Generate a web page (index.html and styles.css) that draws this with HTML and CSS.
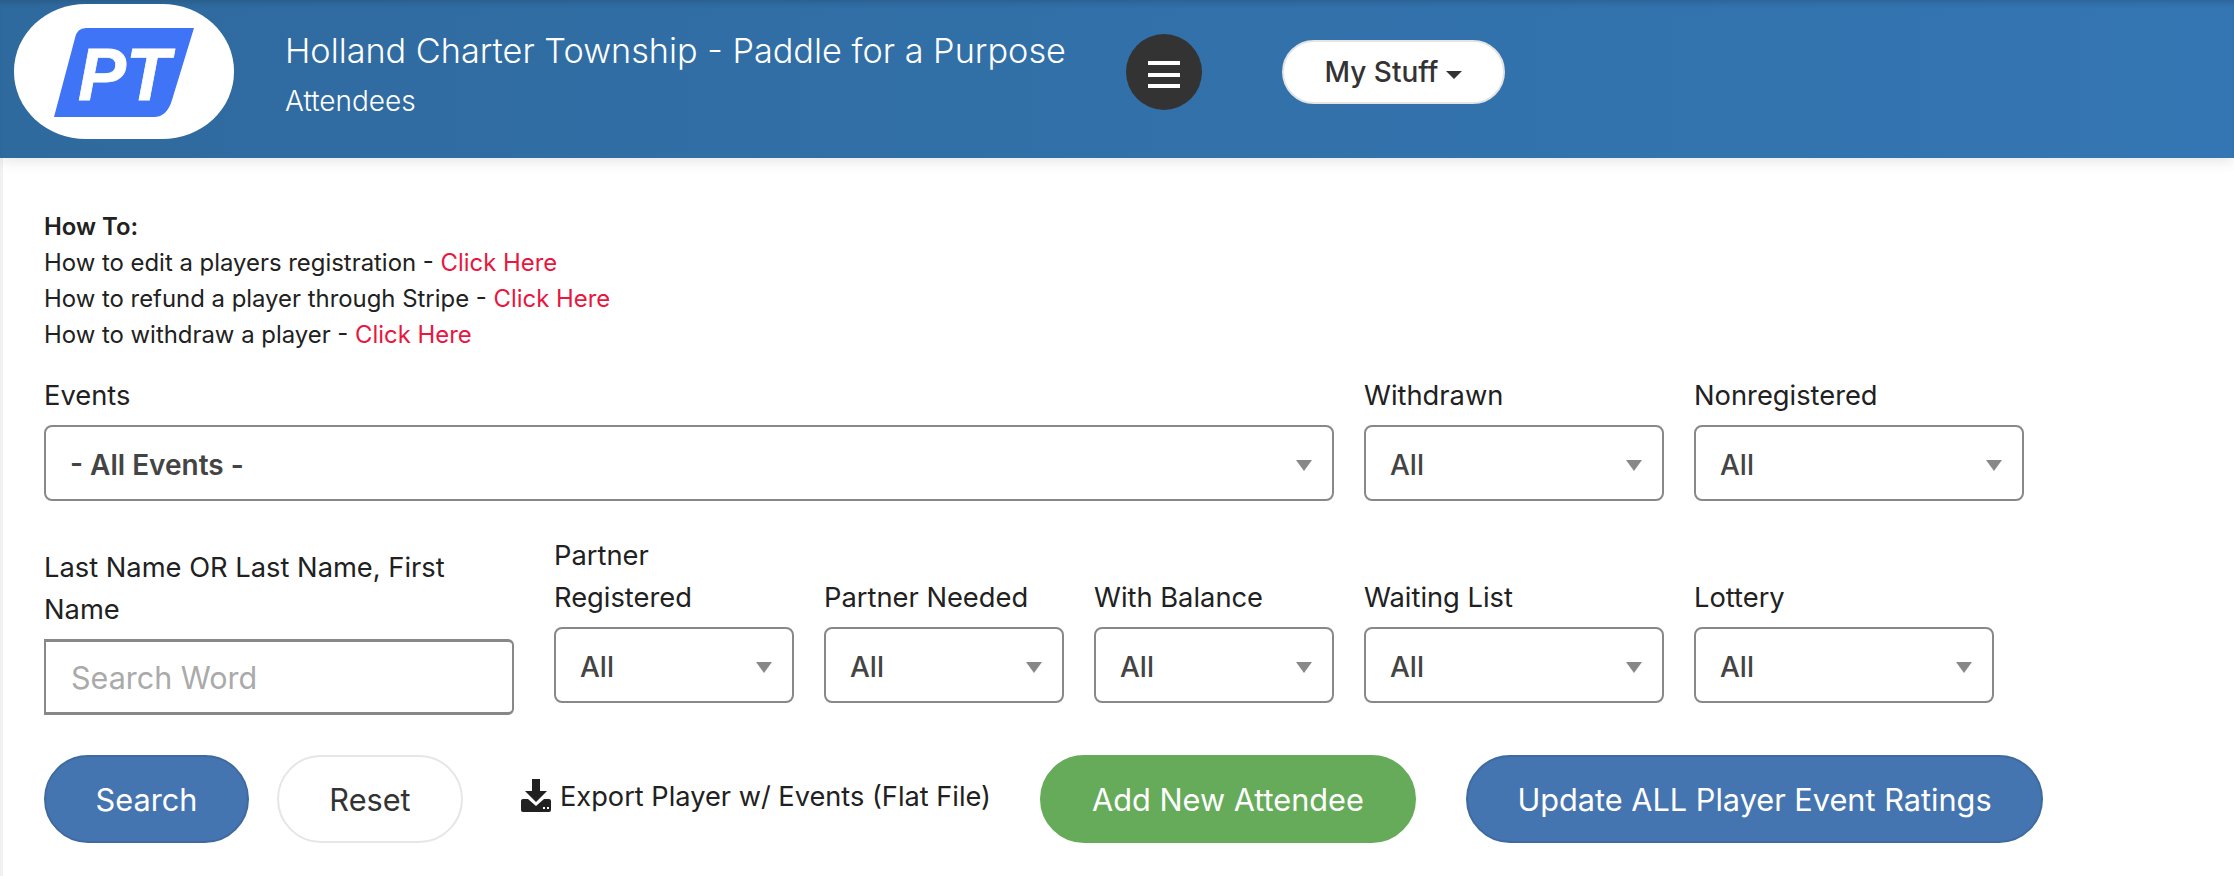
FILE: index.html
```html
<!DOCTYPE html>
<html lang="en">
<head>
<meta charset="utf-8">
<title>Attendees</title>
<link rel="stylesheet" href="styles.css">
</head>
<body>
<header class="topbar">
  <div class="logo">
    <svg class="logo-mark" viewBox="0 0 140 89" aria-hidden="true">
      <path class="logo-shape" d="M32 0H140L118 72Q113 89 100 89H0L21 10Q23 0 32 0Z"/>
      <text class="logo-text" x="24" y="72" textLength="92" lengthAdjust="spacingAndGlyphs">PT</text>
    </svg>
  </div>
  <div class="titles">
    <div class="title">Holland Charter Township - Paddle for a Purpose</div>
    <div class="subtitle">Attendees</div>
  </div>
  <button class="menu-btn" aria-label="Menu"><span></span><span></span><span></span></button>
  <button class="stuff-btn">My Stuff<i class="caret"></i></button>
</header>
<main class="content">
  <section class="howto">
    <div class="howto-head">How To:</div>
    <div>How to edit a players registration - <a href="#">Click Here</a></div>
    <div>How to refund a player through Stripe - <a href="#">Click Here</a></div>
    <div>How to withdraw a player - <a href="#">Click Here</a></div>
  </section>
  <form class="filters">
    <div class="row row-one">
      <div class="field w-events">
        <label>Events</label>
        <div class="select"><select class="strong"><option>- All Events -</option></select></div>
      </div>
      <div class="field w-300">
        <label>Withdrawn</label>
        <div class="select"><select><option>All</option></select></div>
      </div>
      <div class="field w-330">
        <label>Nonregistered</label>
        <div class="select"><select><option>All</option></select></div>
      </div>
    </div>
    <div class="row row-two">
      <div class="field w-name">
        <label class="label-name">Last Name OR Last Name, First Name</label>
        <input class="search" type="text" placeholder="Search Word">
      </div>
      <div class="field w-240">
        <label class="label-narrow">Partner Registered</label>
        <div class="select"><select><option>All</option></select></div>
      </div>
      <div class="field w-240">
        <label>Partner Needed</label>
        <div class="select"><select><option>All</option></select></div>
      </div>
      <div class="field w-240">
        <label>With Balance</label>
        <div class="select"><select><option>All</option></select></div>
      </div>
      <div class="field w-300">
        <label>Waiting List</label>
        <div class="select"><select><option>All</option></select></div>
      </div>
      <div class="field w-300">
        <label>Lottery</label>
        <div class="select"><select><option>All</option></select></div>
      </div>
    </div>
    <div class="actions">
      <button type="button" class="btn btn-blue btn-search">Search</button>
      <button type="button" class="btn btn-white btn-reset">Reset</button>
      <a class="export" href="#">
        <svg class="export-icon" viewBox="0 0 30 33" aria-hidden="true">
          <path d="M11 0H19V12H26L15 23L4 12H11Z"/>
          <path fill-rule="evenodd" d="M0 22Q0 20 2 20H7L15 27L23 20H28Q30 20 30 22V31Q30 33 28 33H2Q0 33 0 31ZM22 28V30H24V28ZM26 28V30H28V28Z"/>
        </svg>
        <span>Export Player w/ Events (Flat File)</span>
      </a>
      <button type="button" class="btn btn-green btn-add">Add New Attendee</button>
      <button type="button" class="btn btn-blue btn-update">Update ALL Player Event Ratings</button>
    </div>
  </form>
</main>
</body>
</html>
```
FILE: styles.css
```css
* { box-sizing: border-box; }
html, body { margin: 0; padding: 0; height: 100%; }
body {
  font-family: Inter, "Liberation Sans", sans-serif;
  color: #212121;
  background: #fff;
  overflow: hidden;
}
.topbar {
  height: 158px;
  display: flex;
  align-items: flex-start;
  background: linear-gradient(90deg, #2f6a9e 0%, #3476b3 100%);
  box-shadow: inset 0 6px 6px -4px rgba(30, 60, 90, .35), 0 2px 14px rgba(0, 0, 0, .12);
  position: relative;
}
.logo {
  width: 220px;
  height: 135px;
  margin: 4px 0 0 14px;
  border-radius: 72px / 67px;
  background: #fff;
  display: flex;
  align-items: center;
  justify-content: center;
  flex: none;
}
.logo-mark { width: 140px; height: 89px; margin-top: 1px; }
.logo-shape { fill: #4074f6; }
.logo-text {
  fill: #fff;
  stroke: #fff;
  stroke-width: .8px;
  font-family: "Liberation Sans", sans-serif;
  font-size: 75px;
  font-weight: 700;
  font-style: italic;
}
.titles { margin-left: 51px; width: 841px; flex: none; color: #fff; }
.title { font-size: 34.25px; font-weight: 300; line-height: 40px; margin-top: 31px; white-space: nowrap; }
.subtitle { font-size: 28px; font-weight: 300; line-height: 32px; margin-top: 14px; }
.menu-btn {
  width: 76px;
  height: 76px;
  margin: 34px 0 0 0;
  flex: none;
  border: 0;
  padding: 5px 0 0;
  border-radius: 50%;
  background: #333;
  display: flex;
  flex-direction: column;
  align-items: center;
  justify-content: center;
  gap: 7.5px;
}
.menu-btn span { display: block; width: 32px; height: 4px; background: #fff; }
.stuff-btn {
  width: 223px;
  height: 64px;
  margin: 40px 0 0 80px;
  flex: none;
  border: 2px solid #e4e4e4;
  border-radius: 32px;
  background: #fff;
  font: 500 28px Inter, "Liberation Sans", sans-serif;
  color: #333;
  padding: 0;
}
.caret {
  display: inline-block;
  margin-left: 8px;
  vertical-align: 3px;
  border-top: 8px solid #333;
  border-left: 8px solid transparent;
  border-right: 8px solid transparent;
}
.content {
  height: 718px;
  padding: 51px 0 0 44px;
  border-left: 3px solid #f1f1f1;
}
.howto { margin-left: -3px; font-size: 23.9px; line-height: 36px; color: #212121; }
.howto-head { font-weight: 600; }
.howto a { color: #e8173f; text-decoration: none; }
.filters { margin: 0 0 0 -3px; }
.row { display: flex; gap: 30px; align-items: flex-end; }
.row-one { margin-top: 22px; }
.row-two { margin-top: 34px; }
.field { flex: none; }
.field label { display: block; font-size: 27.3px; line-height: 42px; color: #212121; margin-bottom: 8px; }
.field .label-narrow { max-width: 200px; }
.field .label-name { max-width: 440px; }
.w-events { width: 1290px; }
.w-300 { width: 300px; }
.w-330 { width: 330px; }
.w-240 { width: 240px; }
.w-name { width: 480px; }
.select { position: relative; }
.select::after {
  content: "";
  position: absolute;
  right: 22px;
  top: 35px;
  border-top: 11px solid #888;
  border-left: 8px solid transparent;
  border-right: 8px solid transparent;
  pointer-events: none;
}
.select select {
  appearance: none;
  -webkit-appearance: none;
  display: block;
  width: 100%;
  height: 76px;
  border: 2px solid #888;
  border-radius: 8px;
  background: #fff;
  padding: 3px 24px 0;
  font: 500 28px Inter, "Liberation Sans", sans-serif;
  color: #444;
}
.select select.strong { font-weight: 600; }
.search {
  display: block;
  width: 470px;
  height: 76px;
  margin-bottom: -12px;
  border-style: solid;
  border-color: #888;
  border-width: 3px 2px;
  border-radius: 0 6px 6px 0;
  padding: 0 25px;
  font: 400 30.5px Inter, "Liberation Sans", sans-serif;
  color: #444;
  background: #fff;
}
.search::placeholder { color: #aaa; }
.actions { display: flex; align-items: flex-start; margin-top: 52px; }
.btn {
  height: 88px;
  border-radius: 44px;
  font: 400 30.7px Inter, "Liberation Sans", sans-serif;
  padding: 0;
  flex: none;
}
.btn-blue { background: #4575b0; border: 2px solid #3f6a9f; color: #fff; }
.btn-green { background: #66ab5a; border: 2px solid #66ab5a; color: #fff; }
.btn-white { background: #fff; border: 2px solid #e6e6e6; color: #333; }
.btn-search { width: 205px; }
.btn-reset { width: 186px; margin-left: 28px; }
.export {
  display: flex;
  align-items: flex-start;
  margin: 24px 0 0 58px;
  width: 468px;
  flex: none;
  color: #212121;
  text-decoration: none;
  font-size: 27.2px;
  line-height: 36px;
  white-space: nowrap;
}
.export-icon { width: 30px; height: 33px; fill: #212121; margin-right: 9px; flex: none; }
.btn-add { width: 376px; margin-left: 51px; }
.btn-update { width: 577px; margin-left: 50px; }
```
